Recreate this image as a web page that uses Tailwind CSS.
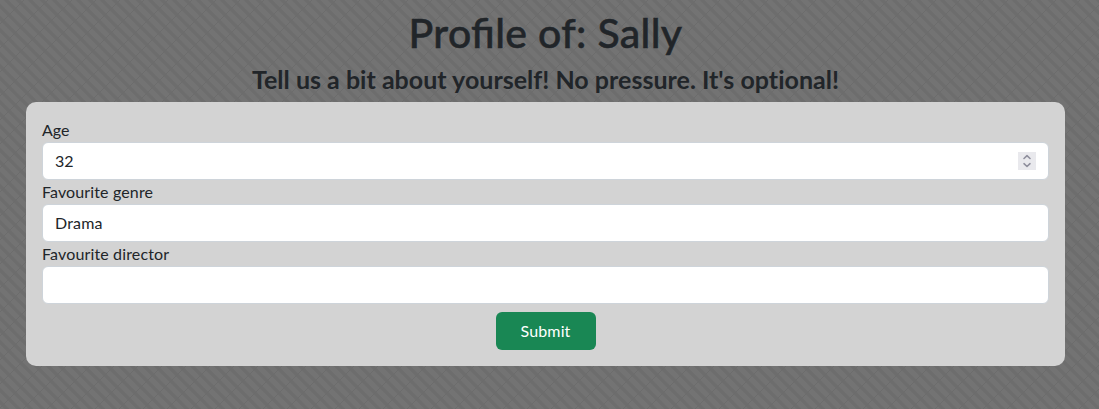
<!DOCTYPE html>
<html lang="en">
<head>
<meta charset="utf-8">
<title>Profile of: Sally</title>
<script src="https://cdn.jsdelivr.net/npm/@tailwindcss/browser@4"></script>
</head>
<body class="relative h-screen overflow-hidden bg-[#6d6d6d] font-['Lato',sans-serif] text-base text-[#212529]">
<svg class="absolute inset-0 -z-10 h-full w-full" aria-hidden="true">
  <defs>
    <pattern id="weave" width="24" height="24" patternUnits="userSpaceOnUse">
      <path d="M-12 -12L36 36M0 -12L48 36M12 -12L60 36M-24 -12L24 36M-36 -12L12 36" stroke="#737373" stroke-width="5"/>
      <path d="M-2 26L26 -2M-2 2L2 -2M22 26L26 22" stroke="#6c6c6c" stroke-width="1"/>
    </pattern>
  </defs>
  <rect width="100%" height="100%" fill="url(#weave)"/>
</svg>
<main class="flex flex-col pt-[9px] pr-[34px] pl-[26px]">
  <h1 class="mb-2 text-center text-[41px] leading-[48px] font-medium tracking-[0.34px] [font-feature-settings:'liga'] [-webkit-text-stroke:0.5px_#212529]">Profile of: Sally</h1>
  <h2 class="mb-2 text-center text-[25px] leading-[29px] font-bold tracking-[0.02px]">Tell us a bit about yourself! No pressure. It's optional!</h2>
  <form class="flex h-[264px] flex-col rounded-[10px] bg-[#d3d3d3] p-4">
    <label for="age" class="h-6 leading-6 tracking-[0.03px]">Age</label>
    <div class="flex h-[38px] items-center rounded-md border border-[#ced4da] bg-white pr-3 pl-3">
      <input id="age" value="32" class="min-w-0 flex-1 outline-none">
      <svg class="h-[18px] w-[18px] bg-[#e9e9ed]" viewBox="0 0 18 18" fill="none" stroke="#8f8f9d" stroke-width="1.6" stroke-linecap="round" stroke-linejoin="round"><path d="M6 6.500L9 3.700L12 6.500M6 11.700L9 14.500L12 11.700"/></svg>
    </div>
    <label for="genre" class="h-6 leading-6 tracking-[0.13px]">Favourite genre</label>
    <input id="genre" value="Drama" class="h-[38px] rounded-md border border-[#ced4da] bg-white px-3 pb-0.5 tracking-[0.2px]">
    <label for="director" class="h-6 leading-6 tracking-[0.15px]">Favourite director</label>
    <input id="director" class="h-[38px] rounded-md border border-[#ced4da] bg-white px-3">
    <button type="button" class="mt-2 h-[38px] w-[100px] self-center rounded-md bg-[#198754] tracking-[0.15px] text-white">Submit</button>
  </form>
</main>
</body>
</html>
